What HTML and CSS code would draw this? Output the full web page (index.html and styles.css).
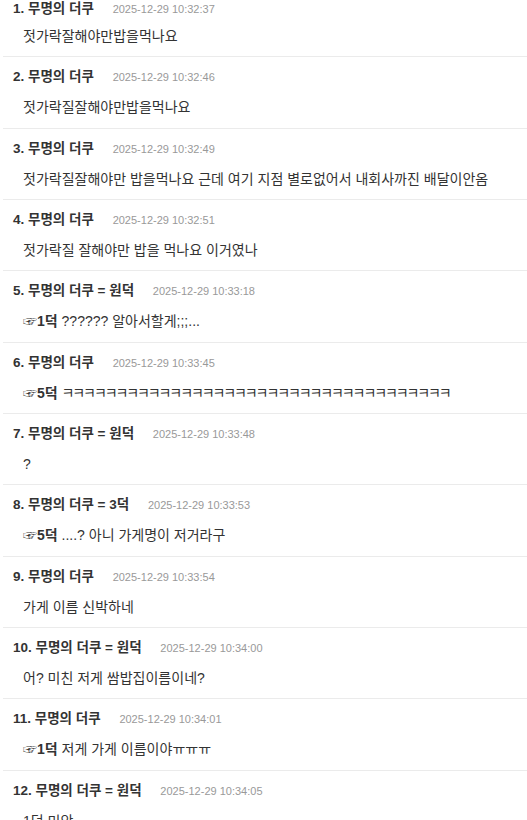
FILE: index.html
```html
<!DOCTYPE html>
<html lang="ko">
<head>
    <meta charset="UTF-8">
    <meta name="viewport" content="width=device-width, initial-scale=1.0">
    <title>댓글</title>
    <link rel="stylesheet" href="styles.css">
</head>
<body>
    <ul class="comments">
        <li class="comment">
            <div class="head">1. 무명의 더쿠 <span class="date">2025-12-29 10:32:37</span></div>
            <div class="text">젓가락잘해야만밥을먹나요</div>
        </li>
        <li class="comment">
            <div class="head">2. 무명의 더쿠 <span class="date">2025-12-29 10:32:46</span></div>
            <div class="text">젓가락질잘해야만밥을먹나요</div>
        </li>
        <li class="comment">
            <div class="head">3. 무명의 더쿠 <span class="date">2025-12-29 10:32:49</span></div>
            <div class="text">젓가락질잘해야만 밥을먹나요 근데 여기 지점 별로없어서 내회사까진 배달이안옴</div>
        </li>
        <li class="comment">
            <div class="head">4. 무명의 더쿠 <span class="date">2025-12-29 10:32:51</span></div>
            <div class="text">젓가락질 잘해야만 밥을 먹나요 이거였나</div>
        </li>
        <li class="comment">
            <div class="head">5. 무명의 더쿠 = 원덕 <span class="date">2025-12-29 10:33:18</span></div>
            <div class="text"><b class="reply">☞1덕</b> ?????? 알아서할게;;;...</div>
        </li>
        <li class="comment">
            <div class="head">6. 무명의 더쿠 <span class="date">2025-12-29 10:33:45</span></div>
            <div class="text"><b class="reply">☞5덕</b> <span class="laugh">ㅋㅋㅋㅋㅋㅋㅋㅋㅋㅋㅋㅋㅋㅋㅋㅋㅋㅋㅋㅋㅋㅋㅋㅋㅋㅋㅋㅋㅋㅋㅋㅋㅋㅋㅋㅋ</span></div>
        </li>
        <li class="comment">
            <div class="head">7. 무명의 더쿠 = 원덕 <span class="date">2025-12-29 10:33:48</span></div>
            <div class="text">?</div>
        </li>
        <li class="comment">
            <div class="head">8. 무명의 더쿠 = 3덕 <span class="date">2025-12-29 10:33:53</span></div>
            <div class="text"><b class="reply">☞5덕</b> ....? 아니 가게명이 저거라구</div>
        </li>
        <li class="comment">
            <div class="head">9. 무명의 더쿠 <span class="date">2025-12-29 10:33:54</span></div>
            <div class="text">가게 이름 신박하네</div>
        </li>
        <li class="comment">
            <div class="head">10. 무명의 더쿠 = 원덕 <span class="date">2025-12-29 10:34:00</span></div>
            <div class="text">어? 미친 저게 쌈밥집이름이네?</div>
        </li>
        <li class="comment">
            <div class="head">11. 무명의 더쿠 <span class="date">2025-12-29 10:34:01</span></div>
            <div class="text"><b class="reply">☞1덕</b> 저게 가게 이름이야ㅠㅠㅠ</div>
        </li>
        <li class="comment">
            <div class="head">12. 무명의 더쿠 = 원덕 <span class="date">2025-12-29 10:34:05</span></div>
            <div class="text">1덕 미안</div>
        </li>
    </ul>
</body>
</html>
```

FILE: styles.css
```css
html, body {
    margin: 0;
    overflow: hidden;
}
body {
    font-family: "Liberation Sans", "Noto Sans CJK KR", sans-serif;
    color: #333;
    background: #fff;
}
.comments {
    list-style: none;
    margin: 0 0 0 3px;
    padding: 0;
}
.comment {
    padding: 11px 0 11.33px 10px;
    border-bottom: 1px solid #ebebeb;
}
.comment:first-child {
    padding-top: 0;
}
.head {
    height: 18px;
    font-size: 13.5px;
    font-weight: bold;
    line-height: 18px;
    white-space: nowrap;
}
.date {
    margin-left: 15px;
    font-size: 11px;
    font-weight: normal;
    color: #999;
}
.text {
    height: 18px;
    margin-top: 12px;
    padding-left: 10px;
    font-size: 14px;
    line-height: 18px;
    white-space: nowrap;
}
.comment:first-child .text {
    margin-top: 9px;
}
.reply {
    font-weight: bold;
}
.laugh {
    letter-spacing: -2.1px;
}
```
